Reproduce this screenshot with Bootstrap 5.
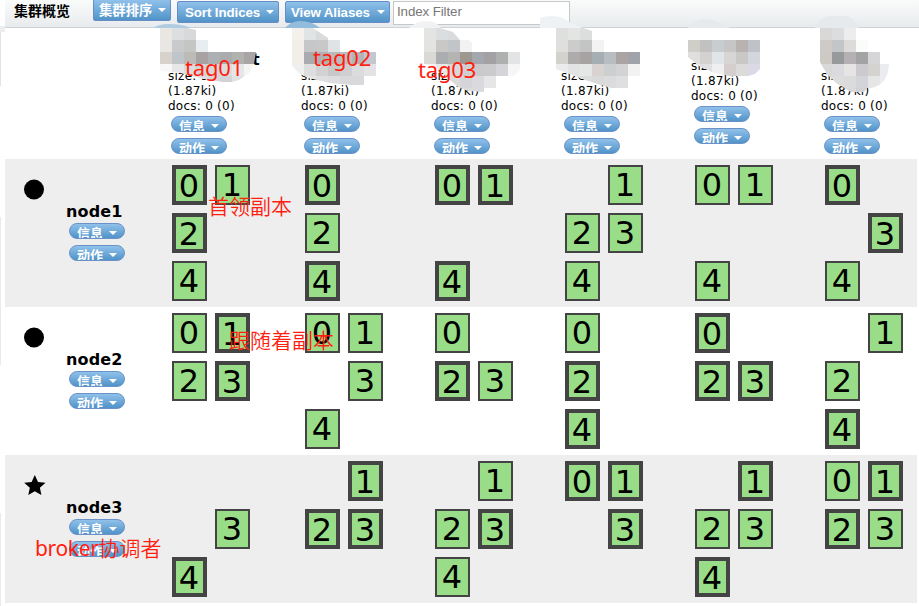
<!DOCTYPE html>
<html lang="zh-CN">
<head>
<meta charset="utf-8">
<meta name="viewport" content="width=device-width, initial-scale=1">
<title>集群概览</title>
<link href="https://cdn.jsdelivr.net/npm/bootstrap@5.3.0/dist/css/bootstrap.min.css" rel="stylesheet">
<style>
body{font-family:"DejaVu Sans","Noto Sans CJK SC",sans-serif;font-size:12px;line-height:15px;color:#000;width:919px;height:606px}
.gutter{width:5px;flex:none;padding-top:26px}
.edge-a{height:6px;background:#eee}.edge-b{height:54px;width:1px;background:#dfe5ea}
.edge-c{height:148px;width:1px;margin-top:131px;background:#eaeaea}.edge-d{height:93px;width:1px;margin-top:148px;background:#eaeaea}
.toolbar{height:28px;background:linear-gradient(#fafbfb,#e8ebed);border-bottom:1px solid #cfd3d6;width:914px;font-family:"Liberation Sans","Noto Sans CJK SC",sans-serif}
.heading{font-size:14px;font-weight:700;line-height:22px;padding-left:9px;width:88px}
.tool{height:22px;border:1px solid #668dc6;border-radius:2px;background:linear-gradient(#90c1ea,#5193c8);color:#fff;font-size:13.33px;font-weight:700;line-height:19px;padding:0 4px 0 7px;margin-top:1px;white-space:nowrap}
.tool + .tool{padding-left:7px;letter-spacing:-.1px}
.tool + .tool + .tool{padding-left:5px}
.tool.first{margin-top:-1px;line-height:21px;padding-left:5px}
.tool i,.pill i{border:4px solid transparent;border-top-color:#fff;border-bottom:0;flex:none}
.filter{width:177px;height:24px;margin:1px 0 0 3px;border:1px solid #c5c7c9;border-radius:0;padding:0 3px 4px;font-size:13.33px;letter-spacing:-.1px;color:#777;line-height:18px;background:#fff}
.filter::placeholder{color:#777;opacity:1}
.overview{width:912px}
.line{display:grid;grid-template-columns:163px 133px 130px 130px 130px 130px 96px}
.line.titles{height:131px}.line.node{height:148px}.line.node:nth-child(even){background:#eee}
.index{padding-bottom:5px}.index.up{padding-bottom:15px}
.index b{font-size:16px;line-height:20px;padding-left:84px;position:relative;top:2px}
.index span{letter-spacing:.25px;white-space:nowrap;position:relative;top:1px}
.pill{width:56px;height:16px;border:1px solid #6892c8;border-radius:8px;background:linear-gradient(#90c1ea,#5193c8);color:#fff;font-family:"Noto Sans CJK SC",sans-serif;font-size:13px;font-weight:700;line-height:18px;overflow:hidden;padding:0 7px;margin:3px 0 0 3px;flex:none}
.pill + .pill{margin-top:6px}
.pill em{font-style:normal;height:15px}.pill i{margin-top:7px}
.marker{width:24px;height:24px;margin:18px 0 0 17px}
.node-name{font-size:16px;font-weight:700;line-height:20px;letter-spacing:.15px;margin:1px 0 0 61px}
.node-info .pill{margin-left:64px;margin-top:1px}.node-info .pill + .pill{margin-top:6px}
.shards{display:grid;grid-template-columns:35px 35px;grid-template-rows:repeat(3,40px);gap:8px;padding:6px 0 0 4px}
.shard{border:2px solid #444;background:#9d8;font-size:32px;line-height:37px;text-align:center;text-indent:-1px}
.shard.primary{border-width:4px;line-height:35px}
.overlay{left:0;top:0;pointer-events:none}
.note{color:#ff1e10;font-family:"Noto Sans","Noto Sans CJK SC",sans-serif;font-size:21px;line-height:26px;font-weight:350;white-space:nowrap}
.note.tag{font-weight:400;font-size:22px;letter-spacing:-.15px}
.note .latin{font-weight:400;letter-spacing:-.35px}
.n1{left:185px;top:54px}.n2{left:313px;top:44px}.n3{left:418px;top:56px}
.n4{left:208px;top:193px}.n5{left:229px;top:327px}.n6{left:35px;top:535px}
</style>
</head>
<body class="bg-white position-relative overflow-hidden d-flex">
<aside class="gutter"><div class="edge-a"></div><div class="edge-b"></div><div class="edge-c"></div><div class="edge-d"></div></aside>
<main>
<header class="toolbar d-flex align-items-start">
<div class="heading">集群概览</div>
<div class="tool first d-flex justify-content-between align-items-center" style="width:78px">集群排序<i></i></div>
<div class="tool d-flex justify-content-between align-items-center" style="width:102px;margin-left:6px">Sort Indices<i></i></div>
<div class="tool d-flex justify-content-between align-items-center" style="width:105px;margin-left:6px">View Aliases<i></i></div>
<input class="filter" placeholder="Index Filter">
</header>
<section class="overview" id="overview"></section>
</main>
<svg class="overlay position-absolute" id="mosaics" width="919" height="110"></svg>
<div class="note tag n1 position-absolute">tag01</div>
<div class="note tag n2 position-absolute">tag02</div>
<div class="note tag n3 position-absolute">tag03</div>
<div class="note n4 position-absolute">首领副本</div>
<div class="note n5 position-absolute">跟随着副本</div>
<div class="note n6 position-absolute"><span class="latin">broker</span>协调者</div>
<script src="https://cdn.jsdelivr.net/npm/bootstrap@5.3.0/dist/js/bootstrap.bundle.min.js"></script>
<script>
const pills = ['信息','动作'].map(t => `<div class="pill d-flex justify-content-between"><em>${t}</em><i></i></div>`).join('');
const circle = '<circle cx="12" cy="12.5" r="10"/>';
const star = '<path d="M12.8 2l3.2 7 7.5.7-5.6 5.1 1.5 7.2-6.6-3.7-6.5 3.7 1.5-7.2-5.6-5.1 7.4-.7z"/>';
/* Shard number, "p" marks a primary copy. One string per index column. */
const nodes = [
 ['node1', circle, ['0p 1 2p 4','0p 2 4p','0p 1p 4p','1 2 3 4','0 1 4','0p 3p 4']],
 ['node2', circle, ['0 1p 2 3p','0 1 3 4','0 2p 3','0 2p 4p','0p 2p 3p','1 2 4p']],
 ['node3', star, ['3 4p','1p 2p 3p','1 2 3p 4','0p 1p 3p','1p 2 3 4p','0 1p 2p 3']]
];
let html = '<div class="line titles"><div></div>';
for (let i = 0; i < 6; i++)
  html += `<div class="index d-flex flex-column justify-content-end${i === 4 ? ' up' : ''}">${i ? '' : '<b>t</b>'}<span>size: 9</span><span>(1.87ki)</span><span>docs: 0 (0)</span>${pills}</div>`;
html += '</div>';
for (const [name, shape, cols] of nodes) {
  html += `<div class="line node"><div class="node-info"><svg class="marker d-block" viewBox="0 0 24 24">${shape}</svg><div class="node-name">${name}</div>${pills}</div>`;
  for (const c of cols)
    html += '<div class="shards">' + c.split(' ').map(s => {
      const n = +s[0];
      return `<div class="shard${s[1] ? ' primary' : ''}" style="grid-row:${(n >> 1) + 1};grid-column:${n % 2 + 1}">${n}</div>`;
    }).join('') + '</div>';
  html += '</div>';
}
document.getElementById('overview').innerHTML = html;

/* Pixelated index names: origin, outline, cap over the toolbar, 12px cells by row. */
const mosaics = [
 [160,28,'M160 28h27l9 2v10h12v12h48l-2 12-5 9-10 7-7 2h-10l-22-4-20-5-20-2z','M153 28q6-4 16-4 12 0 23 4z','#b0cce2',['eae7e3 dcdedf d8d9da','e9e7e4 c9cacb c4c6c3 e8edf1','d7d2cb bfc5c9 bcbbb7 a8a2a2 adb0b3 a9abac b0b2ae a9a5a6','f7f7f7 e6e7e8 dcdcdc d5d4d5 d7d7d8 dcdcdd e6e6e6 f4f4f4','eee e8e8e8 e2e2e2 dedee0 d6d6d9 d3d3d7 e2e2e4']],
 [292,28,'M292 28h21l9 6 6 4h12v14h38v24h-12v9h-14l-22-2-22-5-8-4-8-8z','M285 28q6-7 15-7 12 0 20 7z','#93bbdb',['f4f1ed e0e4e5 d9dada','f2efeb c5c7c8 c9c8c8 dfe3e6','f2eeea a9abb1 b0b0b3 bbb9b9 bebebf b4b4b8 c5c7ce','efefef dededf d2d2d2 c9c8c9 cfced0 dcdbdd e3e3e5','eee e5e5e6 dfdfe1 dddcde d9d9dc d9d9dc']],
 [424,28,'M424 28h16l13 4 7 8h9l3 3v9h48v18l-6 6h-18v12h-12v4l-16-1-10-4-10-9-11-10-13-4z','M409 28q7-7 18-7 9 0 14 7z','#f0f2f4',['e4e4e2 dbdedf dadbdc','e3e3e1 c9c8c7 c1c5c7 f2f2f3','dad9d5 acadb1 b6b4b2 9c988f a4a7ad a4a1a4 aeb0b0 e2e4e6','f5f5f5 e8e8e8 d8d8d9 cfced0 cacaca cbcacd d5d4d8 f6f6f6','eee e5e5e6 dcdbdc d5d5d8 dad9dd e6e6e7','eee e6e6e6 dcdbdc dbdbdd dad9dd e6e6e7']],
 [556,28,'M556 28h27l9 3v9h12v12h36v24h-12v12h-17l-23-7-32-12z','M540 28v-10q4-2 12-2 11 0 17 6l14 6z','#eff2f4',['dfe0dd e2e5e4 dbdedd','dfe0de cbcccb c3c5c4 f3f3f3','d3d2cc adabac a7a3a3 a5aeb3 b7bdc1 aaa4a5 a0a3a9','ebebeb e3e2e4 e5e6e6 d8d2d1 cccfd0 d3d3d6 f2f2f3','eee e5e5e6 dcdcdd dad9da dcdbdc dfdfe1 e6e5ee']],
 [688,40,'M688 40h72v29l-5 5-7 2h-18l-16-3-15-7-11-9z','M688 28q7-9 17-9t25 9z','#e6eaed',['cfcec9 c1c1c2 c8cdcf c6c6c7 b8b3b0 bfc3c8','dfdfde d4d2d1 e0e5e9 d8d6d4 c9c8c6 d3d6dd','e8e8e8 e0e0e0 efeff1 d4cfce dcdbda dad9e5']],
 [820,28,'M820 28h36v12h12v12h12v12h9q-1 21-18 24h-4l-3 4h-13l-15-9-9-9-7-12z','M815 28q6-12 15-12h15q9 0 13 12z','#e6eaed',['dad8d6 dcdddf ededee','cecac7 c2c6c9 dcdbd9 fafcfc','cdcac5 979a9b b5b1b3 a2a3a5 d6d6d8','d8d8d8 dbdade e6e5e4 cccacf d4d3d0 ebecf0','ddd dddddd dbdbdb d3d4da e6e6e7 ededf0','ddd ddd d9d9d9 d2d2d6 e6e6e7']]
];
document.getElementById('mosaics').innerHTML = mosaics.map(([x, y, outline, cap, tone, rows], i) =>
  `<clipPath id="m${i}"><path d="${outline}"/></clipPath><path d="${cap}" fill="${tone}"/><g clip-path="url(#m${i})" shape-rendering="crispEdges">` +
  rows.map((r, j) => r.split(' ').map((c, k) => `<rect x="${x + k * 12}" y="${y + j * 12}" width="12" height="12" fill="#${c}"/>`).join('')).join('') + '</g>').join('');
</script>
</body>
</html>
